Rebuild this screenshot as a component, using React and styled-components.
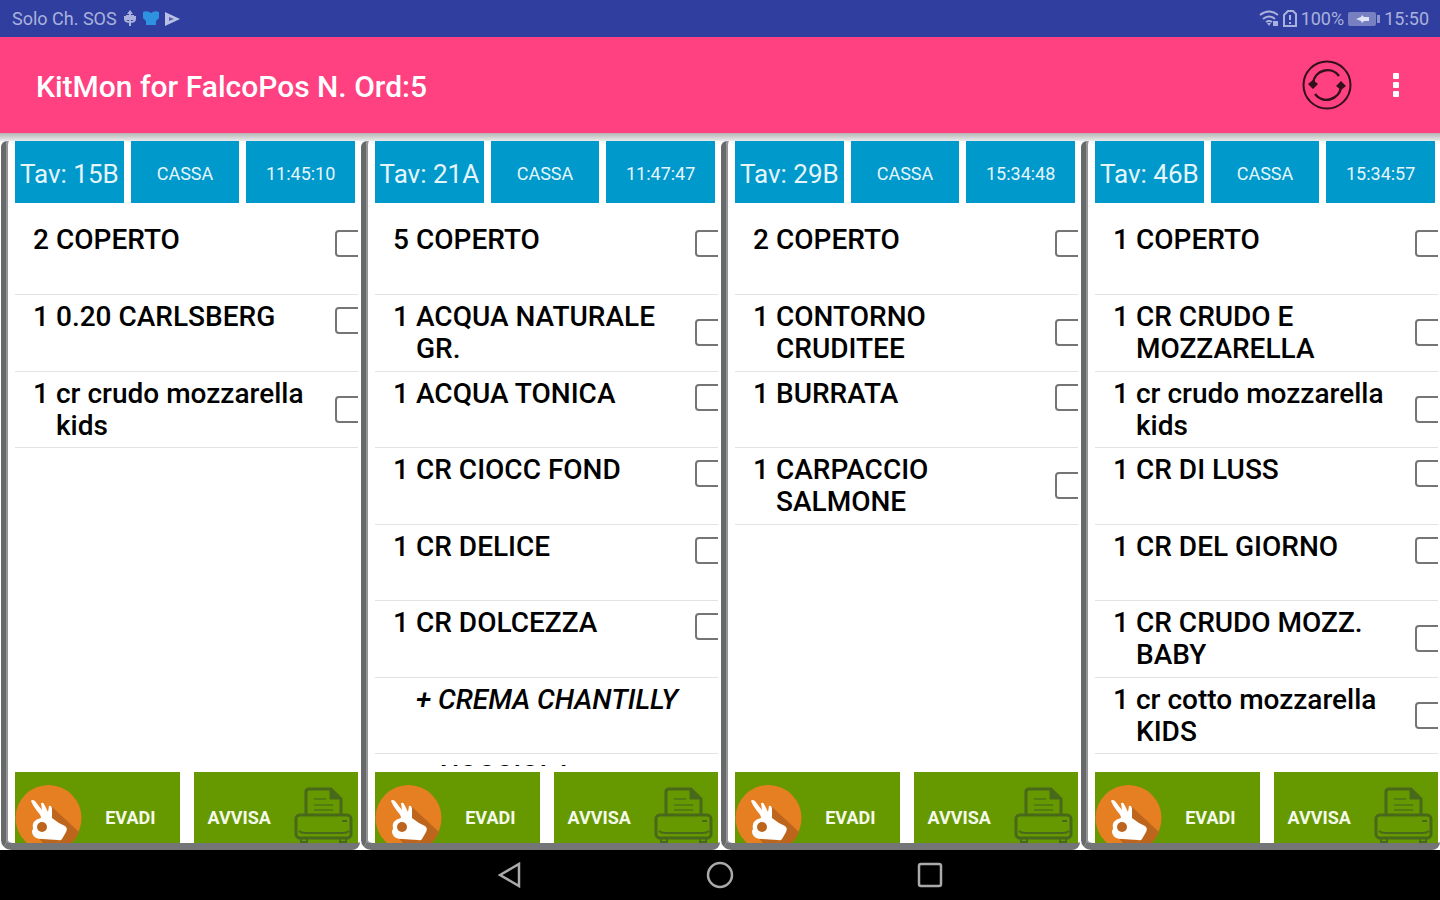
import React, { useState } from 'react';
import styled, { createGlobalStyle } from 'styled-components';

const orders = [
  {
    table: '15B',
    time: '11:45:10',
    items: [
      { qty: 2, name: 'COPERTO' },
      { qty: 1, name: '0.20 CARLSBERG' },
      { qty: 1, name: 'cr crudo mozzarella kids' },
    ],
  },
  {
    table: '21A',
    time: '11:47:47',
    items: [
      { qty: 5, name: 'COPERTO' },
      { qty: 1, name: 'ACQUA NATURALE GR.' },
      { qty: 1, name: 'ACQUA TONICA' },
      { qty: 1, name: 'CR CIOCC FOND' },
      { qty: 1, name: 'CR DELICE' },
      { qty: 1, name: 'CR DOLCEZZA' },
      { extra: true, name: '+ CREMA CHANTILLY' },
      { extra: true, name: '+ NOCCIOLA' },
    ],
  },
  {
    table: '29B',
    time: '15:34:48',
    items: [
      { qty: 2, name: 'COPERTO' },
      { qty: 1, name: 'CONTORNO CRUDITEE' },
      { qty: 1, name: 'BURRATA' },
      { qty: 1, name: 'CARPACCIO SALMONE' },
    ],
  },
  {
    table: '46B',
    time: '15:34:57',
    items: [
      { qty: 1, name: 'COPERTO' },
      { qty: 1, name: 'CR CRUDO E MOZZARELLA' },
      { qty: 1, name: 'cr crudo mozzarella kids' },
      { qty: 1, name: 'CR DI LUSS' },
      { qty: 1, name: 'CR DEL GIORNO' },
      { qty: 1, name: 'CR CRUDO MOZZ. BABY' },
      { qty: 1, name: 'cr cotto mozzarella KIDS' },
    ],
  },
];

const GlobalStyle = createGlobalStyle`
  * {
    box-sizing: border-box;
  }
  body {
    margin: 0;
    background: #000;
    font-family: Roboto, "Liberation Sans", sans-serif;
  }
  button {
    font-family: inherit;
    border: 0;
    padding: 0;
    background: none;
    cursor: pointer;
  }
`;

const Screen = styled.div`
  display: flex;
  flex-direction: column;
  height: 100vh;
`;

const StatusBar = styled.div`
  display: flex;
  justify-content: space-between;
  align-items: center;
  height: 37px;
  padding: 0 11px 0 12px;
  background: #303f9f;
  color: #a9b1dc;
  font-size: 18px;
`;

const StatusGroup = styled.div`
  display: flex;
  align-items: center;
  gap: ${(props) => props.$gap}px;
`;

const AppBar = styled.header`
  display: flex;
  align-items: center;
  height: 96px;
  padding: 0 0 0 36px;
  background: #ff4081;
`;

const Title = styled.h1`
  flex: 1;
  margin: 0;
  padding-top: 2px;
  color: #fff;
  font-size: 30px;
  font-weight: 500;
`;

const IconButton = styled.button`
  display: flex;
  justify-content: center;
  align-items: center;
  width: ${(props) => props.$width}px;
  height: 52px;
`;

const Board = styled.main`
  flex: 1;
  min-height: 0;
  display: grid;
  grid-template-columns: repeat(4, 1fr);
  padding-top: 8px;
  background: linear-gradient(#b4b4b4, #ececec 8px, #fff 9px);
`;

const Card = styled.section`
  display: flex;
  flex-direction: column;
  min-width: 0;
  min-height: 0;
  margin-left: 1px;
  padding: 0 2px 0 9px;
  border-left: 5px solid #67696b;
  border-bottom: 7px solid #737577;
  border-radius: 6px 0 8px 10px;
  background: #fff;
  box-shadow: inset 2px 0 #939597;
`;

const Tiles = styled.div`
  display: grid;
  grid-template-columns: repeat(3, 1fr);
  gap: 7px;
  height: 62px;
  padding-right: 3px;
`;

const Tile = styled.div`
  display: flex;
  justify-content: center;
  align-items: center;
  padding-top: 3px;
  background: #0099cc;
  color: #e6f5fa;
  font-size: ${(props) => (props.$large ? 26 : 18)}px;
  white-space: nowrap;
`;

const Items = styled.ul`
  flex: 1;
  min-height: 0;
  margin: 15px 0 6px;
  padding: 0;
  overflow: hidden;
  list-style: none;
`;

const Item = styled.li`
  height: 77px;
  padding-top: 4px;
  border-bottom: 1px solid #e2e2e2;

  &:nth-child(odd) {
    height: 76px;
  }
  &:first-child {
    height: 77px;
  }
`;

const ItemLabel = styled.label`
  display: flex;
  align-items: center;
  min-height: 42px;
  color: #000;
  font-size: 28px;
  font-weight: 500;
  line-height: 32px;
  font-style: ${(props) => (props.$extra ? 'italic' : 'normal')};
`;

const Qty = styled.span`
  align-self: flex-start;
  width: 41px;
  padding: 2px 7px 0 0;
  text-align: right;
`;

const Name = styled.span`
  flex: 1;
  align-self: flex-start;
  padding-top: 2px;
`;

const Check = styled.input`
  appearance: none;
  flex: none;
  width: 27px;
  height: 27px;
  margin: 0 -4px 0 16px;
  border: 2px solid #757575;
  border-radius: 4px;
  background: #fff;

  &:checked {
    background: #ff4081;
  }
`;

const Actions = styled.div`
  display: grid;
  grid-template-columns: 1fr 1fr;
  gap: 14px;
  height: 71px;
`;

const ActionButton = styled.button`
  display: flex;
  justify-content: space-between;
  align-items: flex-start;
  height: 71px;
  padding: ${(props) => (props.$iconFirst ? '0 24px 0 0' : '0 4px 0 14px')};
  overflow: hidden;
  background: #669900;
  color: #f4f9ea;
  font-size: 18px;
  font-weight: 700;
  line-height: 92px;
`;

const NavBar = styled.nav`
  display: flex;
  justify-content: center;
  align-items: center;
  gap: 158px;
  height: 50px;
  background: #000;
`;

const UsbIcon = () => (
  <svg width="14" height="18" viewBox="0 0 14 18" fill="none" stroke="#a9b1dc" strokeWidth="2">
    <path d="M7 2v14M2 6v3q0 3 5 3M12 6v3q0 3-5 3" />
    <path d="M7 0l3 4H4zM3 5h8v5H3z" fill="#a9b1dc" stroke="none" />
  </svg>
);

const HeartIcon = () => (
  <svg width="16" height="15" viewBox="0 0 16 15" fill="#2d93e0">
    <path d="M0 1q4-2 8 1 4-3 8-1v6l-3 3v4H3v-4L0 7z" />
  </svg>
);

const PlayIcon = () => (
  <svg width="15" height="14" viewBox="0 0 15 14" fill="#b9c0e6">
    <path d="M0 0l15 7-15 7z" />
    <path d="M4 5l5 2-5 2z" fill="#5561b0" />
  </svg>
);

const WifiIcon = () => (
  <svg width="20" height="17" viewBox="0 0 20 17" fill="none" stroke="#a9b1dc" strokeWidth="2">
    <path d="M1 5q9-7 18 0M4 9q6-5 12 0M7 12q3-2 6 0" />
    <path d="M8 13h4l-2 3zM14 11h5v5h-5z" fill="#a9b1dc" stroke="none" />
  </svg>
);

const SimIcon = () => (
  <svg width="14" height="17" viewBox="0 0 14 17" fill="none" stroke="#a9b1dc" strokeWidth="2">
    <path d="M5 1h5l3 3v12H1V5zM7 5v5M7 12v2" />
  </svg>
);

const BatteryIcon = () => (
  <svg width="32" height="14" viewBox="0 0 32 14">
    <rect width="28" height="14" rx="2" fill="#7781c2" />
    <rect x="29" y="3" width="3" height="8" fill="#8c95cd" />
    <path d="M8 7l5-2 1-2 2 2h5v4h-5l-2 2-1-2z" fill="#e0e3f5" />
  </svg>
);

const RefreshIcon = () => (
  <svg width="50" height="50" viewBox="0 0 50 50" fill="none" stroke="#33101d" strokeWidth="2">
    <circle cx="25" cy="25" r="23.5" />
    <path d="M11 23a14.500 14.500 0 0 1 26-7M39 27a14.500 14.500 0 0 1-26 7" strokeWidth="2.500" />
    <path d="M6 24l5-4 5 4-5 5zM34 26l5-5 5 5-5 4z" fill="#33101d" stroke="none" />
  </svg>
);

const MoreIcon = () => (
  <svg width="6" height="26" viewBox="0 0 6 26" fill="#fff">
    <rect y="1" width="6" height="6" rx="1" />
    <rect y="10" width="6" height="6" rx="1" />
    <rect y="19" width="6" height="6" rx="1" />
  </svg>
);

const OkHandIcon = () => (
  <svg width="67" height="84" viewBox="0 0 67 84">
    <circle cx="33.500" cy="46" r="33" fill="#e67e22" />
    <path d="M36 34L64 60q-6 14-20 18H33l-9-12z" fill="#bd651c" />
    <path
      d="M16 29q1-2 4 0l7 9-1-7q2-1 3 1l4 8 1-6q2-1 3 2l0 10q6 5 13 8 3 2 1 6l-4 7q-1 2-4 1l-16-1q-7 0-9-4-2-4 0-6-2-9 8-11 0-3-4-7-4-5-6-10z"
      fill="#fff"
    />
    <circle cx="27" cy="55" r="5" fill="#bd651c" />
  </svg>
);

const PrinterIcon = () => (
  <svg width="60" height="71" viewBox="0 0 60 71" fill="none" stroke="#48691a" strokeWidth="3">
    <path d="M12 42V20q0-3 3-3h22l10 10v15" />
    <path d="M36 17v10h10z" fill="#48691a" strokeWidth="1" />
    <path d="M20 27h12M20 33h19M20 38h19" stroke="#537d10" strokeWidth="2" />
    <rect x="2" y="43" width="55" height="23" rx="4" />
    <path d="M5 59q2 2 6 2h38q4 0 6-2M48 49h5" strokeWidth="2" />
    <path d="M7 67v3h6v-3M46 67v3h6v-3" strokeWidth="2" />
  </svg>
);

function OrderCard({ order }) {
  const [done, setDone] = useState({});

  return (
    <Card>
      <Tiles>
        <Tile $large>Tav: {order.table}</Tile>
        <Tile>CASSA</Tile>
        <Tile>{order.time}</Tile>
      </Tiles>
      <Items>
        {order.items.map((item, i) => (
          <Item key={i}>
            <ItemLabel as={item.extra ? 'div' : 'label'} $extra={item.extra}>
              <Qty>{item.qty}</Qty>
              <Name>{item.name}</Name>
              {!item.extra && (
                <Check
                  type="checkbox"
                  checked={!!done[i]}
                  onChange={() => setDone({ ...done, [i]: !done[i] })}
                />
              )}
            </ItemLabel>
          </Item>
        ))}
      </Items>
      <Actions>
        <ActionButton type="button" $iconFirst>
          <OkHandIcon />
          EVADI
        </ActionButton>
        <ActionButton type="button">
          AVVISA
          <PrinterIcon />
        </ActionButton>
      </Actions>
    </Card>
  );
}

export default function App() {
  return (
    <Screen>
      <GlobalStyle />
      <StatusBar>
        <StatusGroup $gap={6}>
          Solo Ch. SOS
          <UsbIcon />
          <HeartIcon />
          <PlayIcon />
        </StatusGroup>
        <StatusGroup $gap={4}>
          <WifiIcon />
          <SimIcon />
          100%
          <BatteryIcon />
          15:50
        </StatusGroup>
      </StatusBar>
      <AppBar>
        <Title>KitMon for FalcoPos N. Ord:5</Title>
        <IconButton type="button" aria-label="Aggiorna" $width={50}>
          <RefreshIcon />
        </IconButton>
        <IconButton type="button" aria-label="Altre opzioni" $width={88}>
          <MoreIcon />
        </IconButton>
      </AppBar>
      <Board>
        {orders.map((order) => (
          <OrderCard key={order.table} order={order} />
        ))}
      </Board>
      <NavBar>
        <IconButton type="button" aria-label="Indietro" $width={52}>
          <svg width="24" height="28" viewBox="0 0 24 28" fill="none" stroke="#aaa" strokeWidth="2.500">
            <path d="M2 14L21 3v22z" />
          </svg>
        </IconButton>
        <IconButton type="button" aria-label="Home" $width={52}>
          <svg width="28" height="28" viewBox="0 0 28 28" fill="none" stroke="#aaa" strokeWidth="2.500">
            <circle cx="14" cy="14" r="12" />
          </svg>
        </IconButton>
        <IconButton type="button" aria-label="Recenti" $width={52}>
          <svg width="26" height="26" viewBox="0 0 26 26" fill="none" stroke="#aaa" strokeWidth="2.500">
            <rect x="2" y="2" width="22" height="22" rx="2" />
          </svg>
        </IconButton>
      </NavBar>
    </Screen>
  );
}
